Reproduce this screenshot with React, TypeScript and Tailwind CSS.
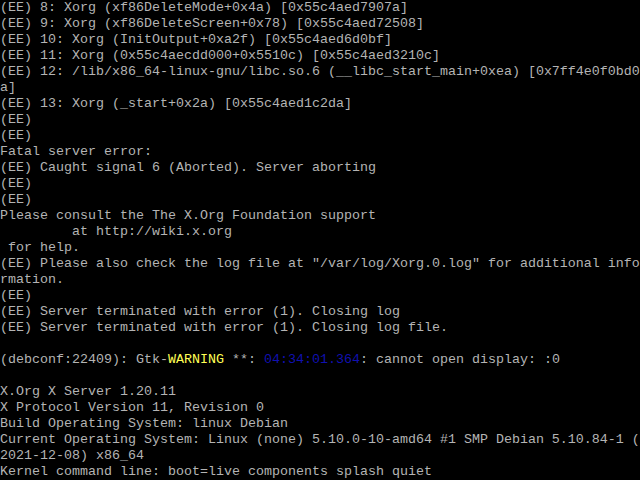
export default function App() {
  const lines = [
    "(EE) 8: Xorg (xf86DeleteMode+0x4a) [0x55c4aed7907a]",
    "(EE) 9: Xorg (xf86DeleteScreen+0x78) [0x55c4aed72508]",
    "(EE) 10: Xorg (InitOutput+0xa2f) [0x55c4aed6d0bf]",
    "(EE) 11: Xorg (0x55c4aecdd000+0x5510c) [0x55c4aed3210c]",
    "(EE) 12: /lib/x86_64-linux-gnu/libc.so.6 (__libc_start_main+0xea) [0x7ff4e0f0bd0",
    "a]",
    "(EE) 13: Xorg (_start+0x2a) [0x55c4aed1c2da]",
    "(EE)",
    "(EE)",
    "Fatal server error:",
    "(EE) Caught signal 6 (Aborted). Server aborting",
    "(EE)",
    "(EE)",
    "Please consult the The X.Org Foundation support",
    "         at http://wiki.x.org",
    " for help.",
    '(EE) Please also check the log file at "/var/log/Xorg.0.log" for additional info',
    "rmation.",
    "(EE)",
    "(EE) Server terminated with error (1). Closing log",
    "(EE) Server terminated with error (1). Closing log file.",
    "",
  ];
  const tail = [
    "",
    "X.Org X Server 1.20.11",
    "X Protocol Version 11, Revision 0",
    "Build Operating System: linux Debian",
    "Current Operating System: Linux (none) 5.10.0-10-amd64 #1 SMP Debian 5.10.84-1 (",
    "2021-12-08) x86_64",
    "Kernel command line: boot=live components splash quiet",
  ];

  return (
    <div className="w-[640px] h-[480px] overflow-hidden bg-black text-[#b4b4b4] font-['Liberation_Mono',monospace] text-[13.33px] leading-[16px] whitespace-pre">
      {lines.map((l, i) => (
        <div key={i} className="h-[16px]">{l}</div>
      ))}
      <div className="h-[16px]">
        (debconf:22409): Gtk-<span className="text-[#ffff55]">WARNING</span> **: <span className="text-[#1010b0]">04:34:01.364</span>: cannot open display: :0
      </div>
      {tail.map((l, i) => (
        <div key={i} className="h-[16px]">{l}</div>
      ))}
    </div>
  );
}
